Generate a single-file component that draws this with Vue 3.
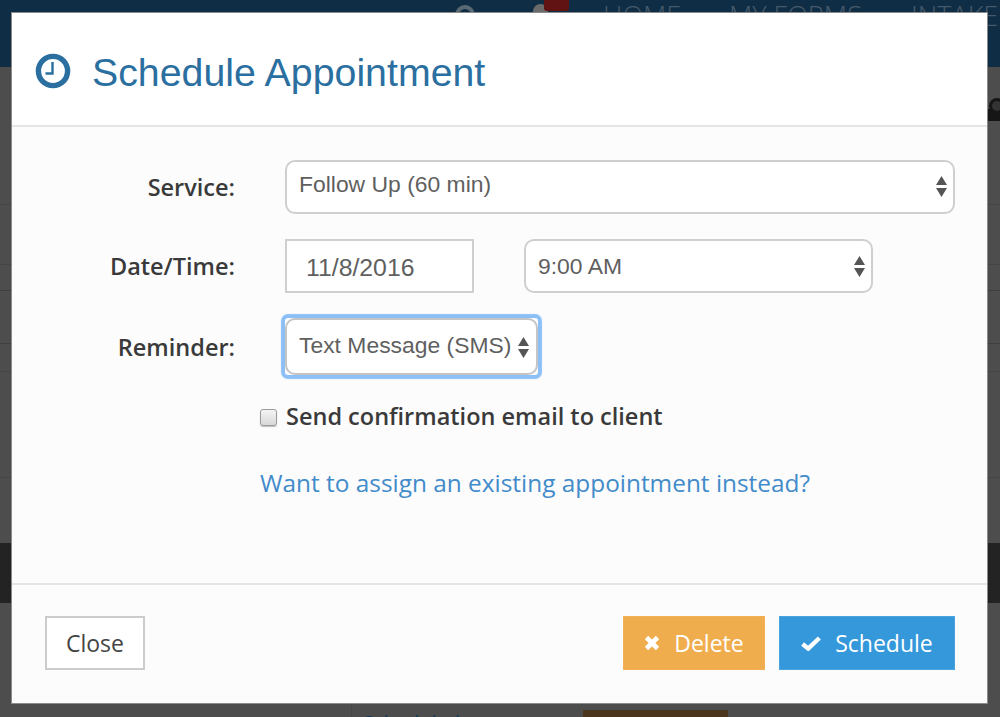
<script setup>
import { ref } from 'vue'

const service = ref('Follow Up (60 min)')
const time = ref('9:00 AM')
const reminder = ref('Text Message (SMS)')
const confirm = ref(false)
</script>

<template>
  <div class="page">
    <!-- page behind the dialog -->
    <div class="nav">
      <span class="nav-search"></span>
      <span class="nav-bell"><i></i></span>
      <span class="nav-link home">HOME</span>
      <span class="nav-link forms">MY FORMS</span>
      <span class="nav-link intake">INTAKE</span>
    </div>
    <div class="backdrop">
      <div class="row r1"></div>
      <div class="row r2"></div>
      <div class="row r3"></div>
      <div class="row r4"></div>
      <div class="row r5"></div>
      <div class="row r6"></div>
      <div class="band"></div>
      <div class="below">
        <div class="below-name">Scheduled</div>
        <div class="below-btn"></div>
      </div>
    </div>
    <div class="black-tab"><i></i></div>

    <div class="modal">
      <div class="modal-header">
        <svg class="clock" viewBox="0 0 36 36" width="36" height="36">
          <circle cx="18" cy="18" r="14.6" fill="none" stroke="#2a6f9f" stroke-width="5.4" />
          <path d="M17.5 9v11.5h-7" fill="none" stroke="#2a6f9f" stroke-width="2.4" />
        </svg>
        <h1>Schedule Appointment</h1>
      </div>

      <div class="modal-body">
        <div class="form-row">
          <label>Service:</label>
          <div class="select-wrap service">
            <select v-model="service">
              <option>Follow Up (60 min)</option>
            </select>
            <svg class="arrows" viewBox="0 0 11 21" width="11" height="21"><path d="M5.5 0L11 9H0zM0 12h11L5.5 21z" /></svg>
          </div>
        </div>
        <div class="form-row">
          <label>Date/Time:</label>
          <input class="date" type="text" value="11/8/2016" />
          <div class="select-wrap time">
            <select v-model="time">
              <option>9:00 AM</option>
            </select>
            <svg class="arrows" viewBox="0 0 11 21" width="11" height="21"><path d="M5.5 0L11 9H0zM0 12h11L5.5 21z" /></svg>
          </div>
        </div>
        <div class="form-row">
          <label>Reminder:</label>
          <div class="select-wrap reminder">
            <select v-model="reminder">
              <option>Text Message (SMS)</option>
            </select>
            <svg class="arrows" viewBox="0 0 11 21" width="11" height="21"><path d="M5.5 0L11 9H0zM0 12h11L5.5 21z" /></svg>
          </div>
        </div>
        <label class="confirm">
          <input type="checkbox" v-model="confirm" />
          <span>Send confirmation email to client</span>
        </label>
        <a class="assign" href="#">Want to assign an existing appointment instead?</a>
      </div>

      <div class="modal-footer">
        <button class="btn btn-close">Close</button>
        <div class="actions">
          <button class="btn btn-delete">
            <svg viewBox="0 0 16 16" width="16" height="16"><path d="M2.5 2.5l11 11M13.5 2.5l-11 11" stroke="#fff" stroke-width="4.6" fill="none" /></svg>
            Delete
          </button>
          <button class="btn btn-schedule">
            <svg viewBox="0 0 20 15" width="20" height="15"><path d="M1.6 8l5.6 4.6L18.4 2" stroke="#fff" stroke-width="4.4" fill="none" /></svg>
            Schedule
          </button>
        </div>
      </div>
    </div>
  </div>
</template>

<style>
html, body {
  margin: 0;
  background: #4d4d4d;
}
</style>

<style scoped>
.page {
  position: relative;
  width: 1000px;
  height: 717px;
  overflow: hidden;
  background: #4d4d4d;
  font-family: "Open Sans", sans-serif;
}

.nav {
  position: relative;
  height: 67px;
  background: #0f2e45;
}
.nav-link {
  position: absolute;
  top: -3px;
  font-size: 27px;
  font-weight: 300;
  color: #46596a;
  white-space: nowrap;
}
.home { left: 603px; }
.forms { left: 729px; }
.intake { left: 911px; }
.nav-search {
  position: absolute;
  left: 455px;
  top: 5px;
  width: 12px;
  height: 12px;
  border: 4px solid #5a6a75;
  border-radius: 50%;
}
.nav-bell {
  position: absolute;
  left: 533px;
  top: 4px;
  width: 15px;
  height: 12px;
  border-radius: 8px 8px 0 0;
  background: #6b6b6b;
}
.nav-bell i {
  position: absolute;
  left: 11px;
  top: -6px;
  width: 25px;
  height: 13px;
  border-radius: 3px;
  background: #611313;
}

.backdrop {
  height: 650px;
  display: flex;
  flex-direction: column;
}
.row {
  border-bottom: 1px solid #454545;
  flex: none;
}
.r1 { height: 137px; }
.r2 { height: 59px; }
.r3 { height: 25px; border-bottom-color: #3f3f3f; }
.r4 { height: 52px; border-bottom-color: #3f3f3f; }
.r5 { height: 27px; }
.r6 { height: 105px; }
.band {
  height: 60px;
  margin-top: 65px;
  background: #232323;
  flex: none;
}
.below {
  flex: 1;
  display: flex;
  padding-left: 351px;
  position: relative;
}
.below-name {
  border-left: 1px solid #454545;
  padding: 106px 0 0 11px;
  font-size: 20px;
  color: #143a5a;
}
.below-btn {
  position: absolute;
  left: 583px;
  top: 107px;
  width: 145px;
  height: 10px;
  background: #4b351d;
}
.black-tab {
  position: absolute;
  left: 987px;
  top: 109px;
  width: 13px;
  height: 12px;
  background: #161616;
}
.black-tab i {
  position: absolute;
  left: 2px;
  top: -11px;
  width: 10px;
  height: 10px;
  border: 3px solid #161616;
  border-radius: 50%;
  background: #333;
}

.modal {
  position: absolute;
  left: 12px;
  top: 13px;
  width: 975px;
  height: 690px;
  display: flex;
  flex-direction: column;
  background: #fcfcfc;
  box-shadow: 0 0 0 1px #8a8a8a;
}
.modal-header {
  height: 112px;
  flex: none;
  box-sizing: content-box;
  display: flex;
  align-items: center;
  gap: 21px;
  padding-left: 23px;
  background: #fff;
  border-bottom: 2px solid #e5e5e5;
}
.clock {
  flex: none;
  margin-top: 4px;
}
h1 {
  margin: 6px 0 0;
  font-family: "Liberation Sans", Arial, sans-serif;
  font-size: 39.3px;
  font-weight: 400;
  color: #2a6f9f;
}

.modal-body {
  flex: 1;
  padding: 33px 32px 0 0;
  display: flex;
  flex-direction: column;
}
.form-row {
  display: flex;
  align-items: center;
  gap: 50px;
  margin-bottom: 25px;
}
.form-row > label {
  width: 223px;
  text-align: right;
  font-size: 23.5px;
  font-weight: 600;
  color: #3a3a3a;
}
.select-wrap {
  position: relative;
  height: 54px;
}
.select-wrap select {
  width: 100%;
  height: 100%;
  box-sizing: border-box;
  appearance: none;
  padding: 0 0 6px 12px;
  border: 2px solid #cfcfcf;
  border-radius: 10px;
  background: #fff;
  font-family: "Liberation Sans", Arial, sans-serif;
  font-size: 22.9px;
  color: #5f5f5f;
}
.arrows {
  position: absolute;
  right: 8px;
  top: 16px;
  fill: #555;
  pointer-events: none;
}
.service { width: 670px; }
.time { width: 349px; }
.time select { padding-bottom: 0; }
.time .arrows { top: 17px; }
.reminder {
  width: 253px;
  height: 57px;
  box-shadow: 0 0 1px 4px #8bbff5;
  border-radius: 3px;
}
.reminder select {
  border-color: #c4c4c4;
  padding-right: 20px;
  padding-bottom: 3px;
}
.reminder .arrows {
  right: 9px;
  top: 19px;
}
.date {
  width: 189px;
  height: 54px;
  box-sizing: border-box;
  padding: 3px 0 0 19px;
  border: 2px solid #cfcfcf;
  border-radius: 0;
  background: #fff;
  font-family: "Liberation Sans", Arial, sans-serif;
  font-size: 24.8px;
  color: #5f5f5f;
  outline: none;
}

.confirm {
  margin: 0 0 0 248px;
  display: flex;
  align-items: center;
  gap: 9px;
  font-size: 23.5px;
  font-weight: 600;
  color: #3a3a3a;
}
.confirm input {
  width: 17px;
  height: 17px;
  margin: 2px 0 0;
  appearance: none;
  border: 1px solid #9a9a9a;
  border-radius: 3px;
  background: linear-gradient(#f4f4f4, #d8d8d8);
  box-shadow: 0 1px 1px rgba(0, 0, 0, 0.25);
}
.assign {
  margin: 34px 0 0 248px;
  font-size: 24.4px;
  color: #428bca;
  text-decoration: none;
}

.modal-footer {
  height: 120px;
  flex: none;
  box-sizing: border-box;
  display: flex;
  justify-content: space-between;
  align-items: flex-start;
  padding: 31px 32px 0 33px;
  border-top: 2px solid #e5e5e5;
}
.actions {
  display: flex;
  gap: 14px;
}
.btn {
  height: 54px;
  box-sizing: border-box;
  border: 1px solid transparent;
  display: inline-flex;
  align-items: center;
  justify-content: center;
  font-family: "Open Sans", sans-serif;
  font-size: 23px;
  font-weight: 400;
  padding: 0;
}
.btn-close {
  width: 100px;
  background: #fff;
  border: 2px solid #ccc;
  color: #444;
}
.btn-delete {
  width: 142px;
  gap: 14px;
  background: #f0ad4e;
  border-color: #f3b057;
  color: #fff;
}
.btn-schedule {
  width: 176px;
  gap: 14px;
  background: #3498db;
  border-color: #4ba3de;
  color: #fff;
}
</style>
